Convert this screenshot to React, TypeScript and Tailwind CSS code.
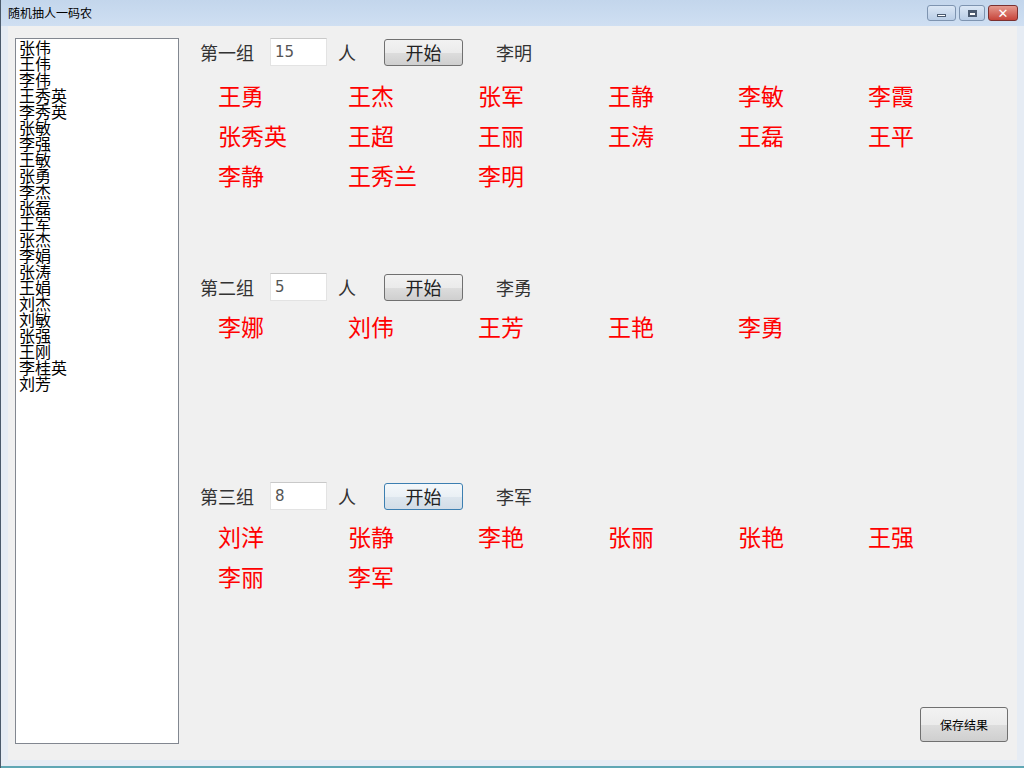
import React from "react";

const listNames = ["张伟","王伟","李伟","王秀英","李秀英","张敏","李强","王敏","张勇","李杰","张磊","王军","张杰","李娟","张涛","王娟","刘杰","刘敏","张强","王刚","李桂英","刘芳"];

type Group = { label: string; count: string; last: string; names: string[]; h: string; mt: string; focused?: boolean };

const groups: Group[] = [
  { label: "第一组", count: "15", last: "李明", names: ["王勇","王杰","张军","王静","李敏","李霞","张秀英","王超","王丽","王涛","王磊","王平","李静","王秀兰","李明"], h: "h-[235px]", mt: "mt-[9px]" },
  { label: "第二组", count: "5", last: "李勇", names: ["李娜","刘伟","王芳","王艳","李勇"], h: "h-[209px]", mt: "mt-[5px]" },
  { label: "第三组", count: "8", last: "李军", names: ["刘洋","张静","李艳","张丽","张艳","王强","李丽","李军"], h: "h-[200px]", mt: "mt-[6px]", focused: true },
];

const font = { fontFamily: '"Noto Sans CJK SC", "Liberation Sans", sans-serif' };

function GroupBlock({ g }: { g: Group }) {
  return (
    <div className={`${g.h} flex flex-col shrink-0`}>
      <div className="flex items-center h-[28px]">
        <div className="w-[70px] text-[18px] text-[#333] leading-none pb-[1px]">{g.label}</div>
        <div className="w-[57px] h-[28px] bg-white border border-[#e3e3e3] border-t-[#c9c9c9] flex items-center pl-[4px] text-[#555] leading-none" style={{ fontFamily: '"DejaVu Sans", sans-serif', fontSize: 15 }}>{g.count}</div>
        <div className="ml-[11px] w-[18px] text-[18px] text-[#333] leading-none pb-[1px]">人</div>
        <div className={`ml-[28px] w-[79px] h-[27px] rounded-[3px] border flex items-center justify-center text-[18px] text-[#222] leading-none ${g.focused ? "border-[#3c7fb1] bg-[linear-gradient(#f4f8fb_0%,#eaf0f5_50%,#dde6ee_51%,#d2dde7_100%)]" : "border-[#707070] bg-[linear-gradient(#f2f2f2_0%,#ebebeb_50%,#dddddd_51%,#cfcfcf_100%)]"}`}>开始</div>
        <div className="ml-[33px] text-[18px] text-[#333] leading-none pb-[1px]">{g.last}</div>
      </div>
      <div className={`${g.mt} pl-[18px] grid grid-cols-[repeat(6,130px)] auto-rows-[40px]`}>
        {g.names.map((n, i) => (
          <div key={i} className="flex items-center text-[23px] text-[#ff0000] leading-none">{n}</div>
        ))}
      </div>
    </div>
  );
}

export default function App() {
  return (
    <div className="w-[1024px] h-[768px] flex flex-col bg-[#e6ecf4] border-l border-[#4b5a6b] overflow-hidden" style={font}>
      <div className="h-[26px] shrink-0 flex items-center bg-[linear-gradient(#c3d6ec,#cfdff2)] pl-[7px] pr-[6px]">
        <div className="text-[12px] text-black leading-none flex-1">随机抽人一码农</div>
        <div className="flex items-start self-start pt-[5px] gap-[3px]">
          <div className="w-[29px] h-[16px] rounded-[3px] border border-[#7e94b0] bg-[linear-gradient(#dbe7f5,#b9cde6)] flex items-center justify-center">
            <div className="w-[9px] h-[3px] bg-white border border-[#4a5a70] mt-[5px]"></div>
          </div>
          <div className="w-[26px] h-[16px] rounded-[3px] border border-[#7e94b0] bg-[linear-gradient(#dbe7f5,#b9cde6)] flex items-center justify-center">
            <div className="w-[9px] h-[7px] bg-white border-2 border-[#4a5a70] border-t-[3px]"></div>
          </div>
          <div className="w-[30px] h-[16px] rounded-[3px] border border-[#7a3030] bg-[linear-gradient(#e59a8f,#c7443a)] flex items-center justify-center text-white text-[13px] font-bold leading-none" style={{ fontFamily: '"DejaVu Sans", sans-serif' }}>✕</div>
        </div>
      </div>
      <div className="flex-1 flex px-[7px] pb-[6px] border-b-2 border-[#5fa7b4]">
        <div className="flex-1 flex bg-[#f0f0f0]">
          <div className="ml-[7px] mt-[12px] mb-[16px] w-[164px] bg-white border border-[#828790] pl-[3px]">
            {listNames.map((n) => (
              <div key={n} className="text-[16px] leading-[16px] text-black">{n}</div>
            ))}
          </div>
          <div className="flex-1 ml-[21px] mt-[12px] pr-[9px] pb-[18px] flex flex-col">
            {groups.map((g) => (
              <GroupBlock key={g.label} g={g} />
            ))}
            <div className="flex-1"></div>
            <div className="self-end w-[88px] h-[35px] rounded-[3px] border border-[#707070] bg-[linear-gradient(#f2f2f2_0%,#ebebeb_50%,#dddddd_51%,#cfcfcf_100%)] flex items-center justify-center text-[12px] text-black leading-none">保存结果</div>
          </div>
        </div>
      </div>
    </div>
  );
}
